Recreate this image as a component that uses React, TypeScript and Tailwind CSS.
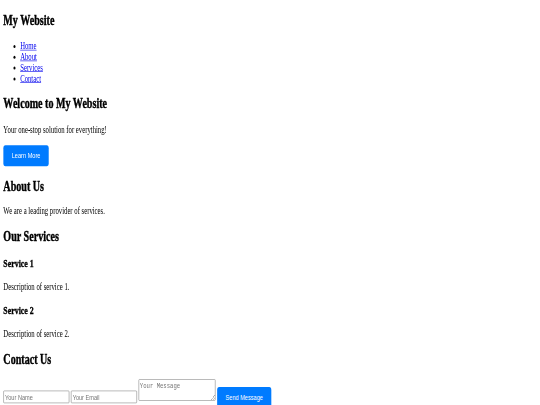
export default function App() {
  const link = "text-[#0000EE] underline";
  const head = "text-[24px] font-bold [-webkit-text-stroke:0.7px_#000]";
  const sub = "text-[18.72px] font-bold [-webkit-text-stroke:0.6px_#000]";
  const field =
    "w-[157px] rounded-[2px] border border-[#767676] bg-white px-[3px] py-[2px] font-['Liberation_Sans',Arial,sans-serif] text-[13.33px] leading-[normal] text-black placeholder:text-[#757575]";
  const btn =
    "w-fit rounded-[5px] bg-[#007bff] px-5 py-[10px] font-['Liberation_Sans',Arial,sans-serif] text-[13.33px] leading-[normal] text-white";
  return (
    <div className="h-[405px] w-[540px] overflow-hidden bg-white">
      <div className="h-[720px] w-[1286px] origin-top-left scale-x-[0.42] scale-y-[0.6] px-2 font-['Liberation_Serif','Times_New_Roman',serif] text-[16px] leading-[normal] text-black">
        <header>
          <h1 className={`mt-[11.7px] ${head}`}>My Website</h1>
          <nav>
            <ul className="mt-[21.1px] list-disc pl-10">
              <li>
                <a href="#" className={link}>Home</a>
              </li>
              <li>
                <a href="#" className={link}>About</a>
              </li>
              <li>
                <a href="#" className={link}>Services</a>
              </li>
              <li>
                <a href="#" className={link}>Contact</a>
              </li>
            </ul>
          </nav>
        </header>

        <section>
          <h2 className={`mt-[18.9px] ${head}`}>Welcome to My Website</h2>
          <p className="mt-[21px]">Your one-stop solution for everything!</p>
          <button className={`mt-[17.2px] block ${btn}`}>Learn More</button>
        </section>

        <section>
          <h2 className={`mt-[20.6px] ${head}`}>About Us</h2>
          <p className="mt-[18px]">We are a leading provider of services.</p>
        </section>

        <section>
          <h2 className={`mt-[20.3px] ${head}`}>Our Services</h2>
          <div>
            <h3 className={`mt-[20.1px] ${sub}`}>Service 1</h3>
            <p className="mt-[20px]">Description of service 1.</p>
          </div>
          <div>
            <h3 className={`mt-[17.4px] ${sub}`}>Service 2</h3>
            <p className="mt-[20.5px]">Description of service 2.</p>
          </div>
        </section>

        <section>
          <h2 className={`mt-[18.9px] ${head}`}>Contact Us</h2>
          <form className="mt-[18.2px] flex items-start gap-[4px]" onSubmit={(e) => e.preventDefault()}>
            <input type="text" placeholder="Your Name" className={`mt-[21.1px] ${field}`} />
            <input type="email" placeholder="Your Email" className={`mt-[21.1px] ${field}`} />
            <textarea
              placeholder="Your Message"
              className="mt-[1.7px] h-[36px] w-[183px] resize-y rounded-[2px] border border-[#767676] bg-white p-[2px] font-['Liberation_Mono','Courier_New',monospace] text-[13.33px] leading-[normal] text-black placeholder:text-[#757575]"
            />
            <button type="submit" className={`mt-[14.4px] ${btn}`}>
              Send Message
            </button>
          </form>
        </section>
      </div>
    </div>
  );
}
